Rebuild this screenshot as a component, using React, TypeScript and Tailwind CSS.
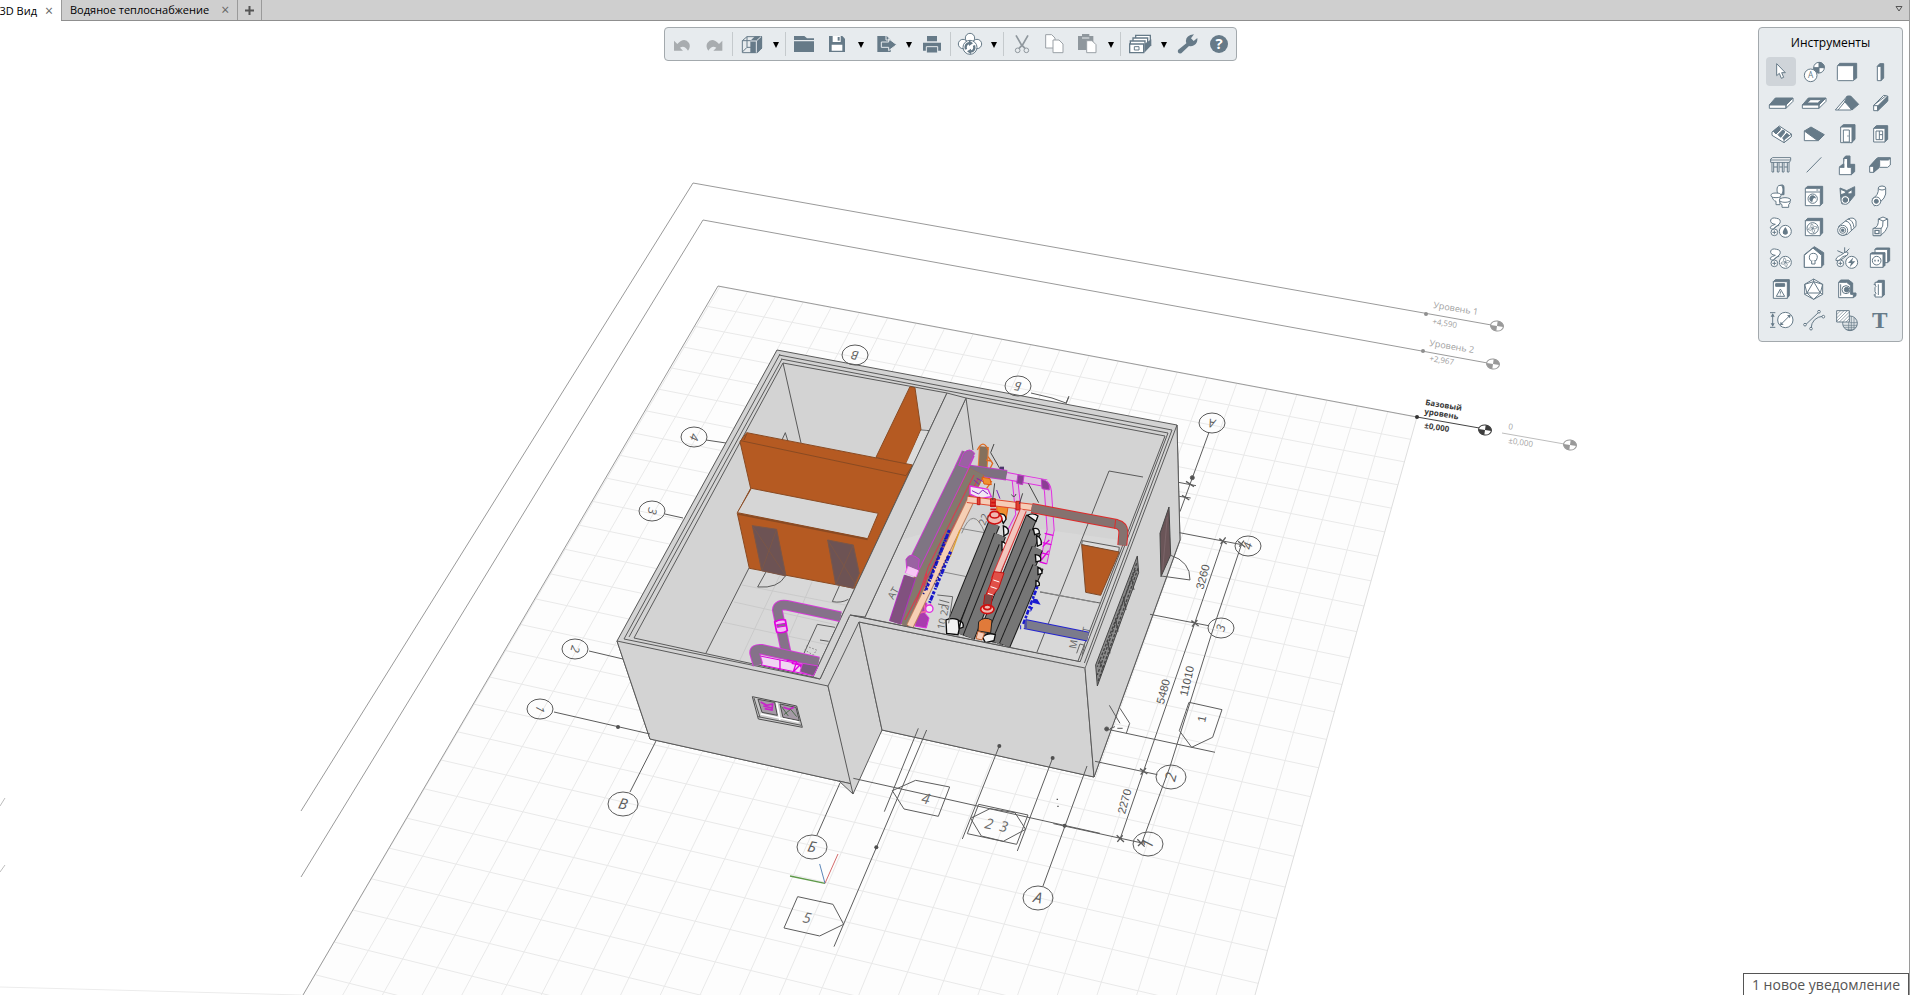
import React, { useState } from 'react';

const DARK = '#667a88';

interface Item {
  label: string;
  art: React.ReactNode;
}

interface ToolbarItem extends Item {
  menu?: boolean;
  off?: boolean;
  endGroup?: boolean;
}

const fan = (cx: number, cy: number, r: number) => (
  <>
    <circle cx={cx} cy={cy} r={r} />
    <path
      fill="none"
      strokeWidth="2"
      d={`M${cx} ${cy}q-10 -4 -4 -13q8 0 4 13q4 -10 13 -4q0 8 -13 4q10 4 4 13q-8 0 -4 -13q-4 10 -13 4q0 -8 13 -4`}
    />
  </>
);

const hose = (
  <>
    <path d="M10 42Q2 36 14 31L22 28Q6 26 8 15Q12 6 26 10Q40 12 36 24Q28 34 16 42Z" />
    <path fill="none" d="M16 42Q24 32 34 30" />
    <circle cx="19" cy="52" r="10" />
    <path d="M19 46v12M13 52h12" />
  </>
);

const toolbarItems: ToolbarItem[] = [
  {
    label: 'Отменить',
    off: true,
    art: <path fill="#a8acaf" stroke="none" d="M15 26V56H42L33 47Q46 38 57 56Q66 44 60 33Q46 14 25 36Z" />,
  },
  {
    label: 'Повторить',
    off: true,
    endGroup: true,
    art: <path fill="#a8acaf" stroke="none" d="M64 26V56H37L46 47Q33 38 22 56Q13 44 19 33Q33 14 54 36Z" />,
  },
  {
    label: 'Вид',
    menu: true,
    endGroup: true,
    art: (
      <>
        <path d="M10 26L24 14H68V48L54 62H10Z" fill="none" />
        <path d="M10 26H38M24 14V46L10 60M24 46H40" fill="none" />
        <path fill={DARK} stroke="none" d="M34 26L48 13H69V49L55 63H34Z" />
        <path fill="none" stroke="#e7ebee" d="M34 27H52V62M52 27L66 14" />
      </>
    ),
  },
  {
    label: 'Открыть',
    art: <path fill={DARK} stroke="none" d="M9 12H40L48 19H69V24H9ZM9 28H69V60H9Z" />,
  },
  {
    label: 'Сохранить',
    menu: true,
    art: (
      <>
        <path fill={DARK} stroke="none" d="M15 12H55L63 20V60H15Z" />
        <path stroke="none" d="M26 12H50V30H26ZM23 38H55V56H23Z" />
        <path fill={DARK} stroke="none" d="M41 15h6v11h-6z" />
      </>
    ),
  },
  {
    label: 'Экспорт',
    menu: true,
    art: (
      <>
        <path fill={DARK} stroke="none" d="M16 12H44L56 24V60H16Z" />
        <path stroke="#e7ebee" d="M28 30H50V20L74 38L50 56V46H28Z" fill={DARK} />
        <path fill="none" stroke="#e7ebee" d="M42 12V24H54" />
      </>
    ),
  },
  {
    label: 'Печать',
    endGroup: true,
    art: (
      <>
        <path fill={DARK} stroke="none" d="M24 12H54V28H24ZM12 32H66V56H12Z" />
        <path fill={DARK} stroke="#e7ebee" d="M22 44H56V63H22Z" />
      </>
    ),
  },
  {
    label: 'Обмен',
    menu: true,
    endGroup: true,
    art: (
      <>
        <circle cx="39" cy="18" r="14" />
        <circle cx="18" cy="36" r="14" />
        <circle cx="60" cy="36" r="14" />
        <circle cx="39" cy="46" r="21" />
        <path fill="none" strokeWidth="7" d="M27 52Q22 36 38 33M51 40Q56 56 40 59" />
        <path fill={DARK} d="M36 25L48 34L36 42ZM42 50L30 58L42 67Z" stroke="none" />
      </>
    ),
  },
  {
    label: 'Вырезать',
    off: true,
    art: (
      <g fill="none" stroke="#8f979d">
        <circle cx="26" cy="55" r="7" />
        <circle cx="52" cy="55" r="7" />
        <path strokeWidth="5" d="M21 10L37 38L48 49M57 10L41 38L30 49" />
      </g>
    ),
  },
  {
    label: 'Копировать',
    off: true,
    art: (
      <g stroke="#9ba1a6">
        <path d="M14 8H32L42 18V48H14Z" />
        <path d="M36 24H54L66 36V62H36Z" />
      </g>
    ),
  },
  {
    label: 'Вставить',
    off: true,
    menu: true,
    endGroup: true,
    art: (
      <>
        <path fill="#8f979d" stroke="none" d="M12 12H24V6H46V12H58V54H12Z" />
        <path stroke="#e7ebee" fill="none" d="M24 18H46" />
        <path stroke="#9ba1a6" d="M38 26H54L66 38V62H38Z" />
      </>
    ),
  },
  {
    label: 'Библиотека',
    menu: true,
    art: (
      <>
        <path d="M26 22V10H70V34" strokeWidth="4" />
        <path d="M18 30V18H62V36" strokeWidth="4" />
        <path d="M10 36V27H54V36" strokeWidth="4" />
        <path fill={DARK} d="M52 36L73 22V40L52 62Z" stroke="none" />
        <path strokeWidth="4" d="M8 36H50V62H8Z" />
        <path d="M22 44H36V54H22Z" />
      </>
    ),
  },
  {
    label: 'Настройки',
    art: (
      <path
        fill={DARK}
        stroke="none"
        d="M12 54L37 34Q32 16 49 9L60 7L51 19L59 27L70 18Q72 34 60 40Q52 44 45 42L22 64Q9 66 12 54Z"
      />
    ),
  },
  {
    label: 'Справка',
    art: (
      <>
        <circle cx="39" cy="36" r="27" fill={DARK} stroke="none" />
        <text x="39" y="52" textAnchor="middle" stroke="none" fontSize="45" fontWeight="700">
          ?
        </text>
      </>
    ),
  },
];

const tools: Item[] = [
  { label: 'Выбор', art: <path d="M26 11V47L34 40L40 55L47 52L41 38H52Z" /> },
  {
    label: 'Уровень и ось',
    art: (
      <>
        <circle cx="54" cy="23" r="16" />
        <path fill={DARK} d="M54 23V7A16 16 0 0 1 70 23ZM54 23V39A16 16 0 0 1 38 23Z" />
        <circle cx="29" cy="46" r="19" />
        <text x="29" y="55" textAnchor="middle" fontSize="25" fill={DARK} stroke="none">
          A
        </text>
      </>
    ),
  },
  {
    label: 'Стена',
    art: (
      <>
        <path fill={DARK} d="M11 17L17 10H68V54L57 62Z" />
        <rect x="10" y="17" width="49" height="45" rx="3" />
      </>
    ),
  },
  {
    label: 'Колонна',
    art: (
      <>
        <path fill={DARK} d="M31 19L38 11H50V54L42 62Z" />
        <path d="M31 19H42V62H31Z" />
      </>
    ),
  },
  {
    label: 'Перекрытие',
    art: (
      <>
        <path fill={DARK} d="M22 21H75L54 42H4Z" />
        <path d="M4 42H54V52H4ZM54 42L75 21V31L54 52Z" />
      </>
    ),
  },
  {
    label: 'Проём',
    art: (
      <>
        <path fill={DARK} d="M22 21H75L54 42H4Z" />
        <path d="M29 26H62L50 36H18Z" />
        <path d="M4 42H54V52H4ZM54 42L75 21V31L54 52Z" />
      </>
    ),
  },
  {
    label: 'Крыша',
    art: (
      <>
        <path d="M4 57L40 15L52 57Z" />
        <path fill="none" d="M12 57L38 26" />
        <path fill={DARK} d="M40 15H50L74 40L54 57L32 32Z" />
      </>
    ),
  },
  {
    label: 'Балка',
    art: (
      <>
        <path d="M20 43L50 13L62 15V30L32 59H20Z" />
        <path fill={DARK} d="M32 45L62 15V30L32 59Z" />
        <path fill="none" d="M20 44H32V58M20 43L26 38L56 15" />
      </>
    ),
  },
  {
    label: 'Лестница',
    art: (
      <>
        <path d="M12 30L34 12L70 36V44L48 62L12 40Z" />
        <path fill={DARK} d="M16 28L32 14Q40 16 36 24L24 36ZM30 38L44 24Q54 26 48 34L38 46ZM44 48L56 34Q66 38 60 44L50 56Z" />
        <path d="M48 54L70 36V44L48 62Z" />
      </>
    ),
  },
  {
    label: 'Пандус',
    art: (
      <>
        <path fill={DARK} d="M10 27L30 15L70 38L52 56Z" />
        <path d="M10 27L50 56H10Z" />
      </>
    ),
  },
  {
    label: 'Дверь',
    art: (
      <>
        <path fill={DARK} d="M20 15L28 8H63V52L53 62Z" />
        <path d="M20 15H54V62H20ZM28 24H46V60H28Z" />
        <path d="M40 42h4" />
      </>
    ),
  },
  {
    label: 'Окно',
    art: (
      <>
        <path fill={DARK} d="M20 19L28 11H62V52L53 60Z" />
        <path d="M20 19H54V60H20ZM27 27H47V53H27ZM37 27V53M37 38H47" />
      </>
    ),
  },
  {
    label: 'Ограждение',
    art: (
      <>
        <path d="M12 26H17V57H12ZM28 26H33V57H28ZM43 26H48V57H43ZM58 26H63V57H58Z" />
        <path d="M8 18L14 14H68V22L64 28H8Z" />
        <path d="M8 21H66M18 42H28M34 42H43M49 42H58" />
      </>
    ),
  },
  { label: 'Линия', art: <path d="M17 58L61 13" /> },
  {
    label: 'Фундамент',
    art: (
      <>
        <path fill={DARK} d="M16 42L26 34H62V56L52 65Z" />
        <path d="M16 43H52V65H16Z" />
        <path fill={DARK} d="M29 16L35 9H48V36L41 42Z" />
        <path stroke="none" d="M31 18H40V46H31Z" />
        <path fill="none" d="M29 43V16H41V42" />
      </>
    ),
  },
  {
    label: 'Профиль',
    art: (
      <>
        <path d="M8 40L32 14H70V36L62 43H38L20 58H8Z" />
        <path fill={DARK} d="M30 16H70L64 21H40L20 40H8ZM20 40L38 24V40L20 58Z" />
      </>
    ),
  },
  {
    label: 'Сантехника',
    art: (
      <>
        <path fill={DARK} d="M32 6Q48 -2 48 10V32H32Z" />
        <ellipse cx="36" cy="18" rx="9" ry="14" />
        <path d="M12 36Q14 50 24 52V62H36V36Z" />
        <ellipse cx="24" cy="34" rx="15" ry="7" />
        <path d="M34 50Q36 60 42 62V70H62V62Q68 58 66 48Z" />
        <ellipse cx="51" cy="48" rx="17" ry="7" />
      </>
    ),
  },
  {
    label: 'Оборудование',
    art: (
      <>
        <path fill={DARK} d="M13 13L20 7H65V58L56 66Z" />
        <path d="M13 13H58V65H13ZM13 24H58" />
        <circle cx="35" cy="44" r="14" />
        <path fill={DARK} stroke="none" d="M27 38A10 10 0 0 1 45 44Q36 38 34 54A10 10 0 0 1 27 38Z" />
        <path d="M46 18h6" />
      </>
    ),
  },
  {
    label: 'Арматура',
    art: (
      <>
        <path fill={DARK} d="M18 12L38 20L62 8V34L44 56L24 60L20 40Z" />
        <path d="M20 16L34 22V28L20 32ZM42 24L54 17V29L42 30Z" />
        <circle cx="34" cy="48" r="13" />
        <circle cx="34" cy="48" r="7" fill={DARK} />
      </>
    ),
  },
  {
    label: 'Труба',
    art: (
      <>
        <path d="M34 12Q46 2 56 12V30Q54 42 40 54L22 66L16 44Q36 34 34 12Z" />
        <ellipse cx="45" cy="12" rx="11" ry="6" />
        <circle cx="28" cy="52" r="13" />
        <circle cx="28" cy="52" r="6" fill={DARK} />
      </>
    ),
  },
  {
    label: 'Система водоснабжения',
    art: (
      <>
        {hose}
        <circle cx="52" cy="49" r="18" />
        <path fill={DARK} stroke="none" d="M52 36Q62 50 59 55Q52 64 45 55Q42 50 52 36Z" />
      </>
    ),
  },
  {
    label: 'Вентиляционное оборудование',
    art: (
      <>
        <path fill={DARK} d="M13 17L20 10H65V54L56 62Z" />
        <path d="M13 17H58V62H13Z" />
        {fan(35, 40, 17)}
      </>
    ),
  },
  {
    label: 'Деталь воздуховода',
    art: (
      <>
        <path d="M14 34L42 12Q60 4 66 18V34L40 58Q26 66 14 56Z" />
        <path fill="none" d="M34 18Q52 20 52 46M42 12Q58 16 60 38" />
        <circle cx="26" cy="46" r="15" />
        <circle cx="26" cy="46" r="9" />
        <circle cx="26" cy="46" r="4" fill={DARK} />
      </>
    ),
  },
  {
    label: 'Воздуховод',
    art: (
      <>
        <path d="M20 40Q36 36 34 12L48 6L62 12V34Q58 50 40 62H20Z" />
        <path fill="none" d="M34 12L48 18L62 12M48 18Q50 36 40 44" />
        <path d="M18 40H42V62H18Z" />
        <path strokeWidth="4" d="M24 46H36V56H24Z" />
      </>
    ),
  },
  {
    label: 'Система вентиляции',
    art: (
      <>
        {hose}
        {fan(52, 49, 18)}
      </>
    ),
  },
  {
    label: 'Осветительный прибор',
    art: (
      <>
        <path fill={DARK} d="M10 26L40 2L68 20V56L60 64H10Z" />
        <path d="M10 28L36 6L62 28V64H10Z" />
        <circle cx="37" cy="34" r="12" />
        <path d="M32 45V54H42V45" />
      </>
    ),
  },
  {
    label: 'Электрическая система',
    art: (
      <>
        <path d="M6 44Q4 34 20 28L34 18Q44 16 42 24Q34 34 20 42Z" />
        <path fill="none" d="M16 42Q26 28 40 28M10 14L28 22M32 4V20M46 8L34 20" />
        <circle cx="19" cy="52" r="10" />
        <path d="M19 46v12M13 52h12" />
        <circle cx="53" cy="49" r="18" />
        <path fill={DARK} stroke="none" d="M58 34L42 51H51L47 64L64 46H54Z" />
      </>
    ),
  },
  {
    label: 'Розетка',
    art: (
      <>
        <path fill={DARK} d="M24 10L28 6H68V44L62 50Z" />
        <path d="M24 10H62V50H24Z" />
        <path fill={DARK} d="M10 24L14 20H54V58L48 64Z" />
        <path d="M10 24H48V64H10Z" />
        <circle cx="29" cy="44" r="13" />
        <path strokeWidth="5" d="M22 44h4M32 44h4" />
      </>
    ),
  },
  {
    label: 'Распределительный щит',
    art: (
      <>
        <path fill={DARK} d="M16 14L22 8H64V56L57 64Z" />
        <path d="M16 14H58V64H16Z" />
        <path fill={DARK} d="M23 20H50V28H23Z" />
        <path d="M37 36L50 58H25Z" />
        <path d="M37 43V50M37 53V55" />
      </>
    ),
  },
  {
    label: 'Элемент',
    art: (
      <>
        <path d="M38 6L65 22V52L38 67L11 52V22Z" />
        <path fill="none" d="M38 14L58 48H18ZM38 6V14M11 22L38 14L65 22M58 48L65 52M18 48L11 52M11 22L18 48L38 67L58 48L65 22" />
      </>
    ),
  },
  {
    label: 'Датчик',
    art: (
      <>
        <path fill={DARK} d="M14 16L20 9H44L56 18V48H66V56L58 62Z" />
        <path d="M14 16H38L50 26V52H58V62H14ZM20 22V56" />
        <circle cx="36" cy="38" r="12" />
        <circle cx="38" cy="38" r="7" fill={DARK} />
      </>
    ),
  },
  {
    label: 'Сборка',
    art: (
      <>
        <path fill={DARK} d="M28 16L34 10H52V54L44 60Z" />
        <path d="M24 16H46V60H24V52Q30 50 24 44V32Q30 28 24 24Z" />
        <path d="M20 22h6M20 54h6M34 22v32" />
      </>
    ),
  },
  {
    label: 'Размер',
    art: (
      <>
        <path d="M6 14H22M6 58H22M14 18V54" fill="none" />
        <path fill={DARK} stroke="none" d="M14 16L20 26H8ZM14 56L20 46H8Z" />
        <circle cx="52" cy="36" r="23" />
        <path d="M38 50L66 22" />
        <path fill={DARK} stroke="none" d="M68 20L66 31L57 22ZM36 52L38 41L47 50Z" />
      </>
    ),
  },
  {
    label: 'Сплайн',
    art: (
      <>
        <path fill="none" d="M14 50L54 12M30 62Q32 28 68 24" />
        <circle cx="12" cy="50" r="4" />
        <circle cx="54" cy="11" r="4" />
        <circle cx="30" cy="62" r="4" />
        <circle cx="67" cy="26" r="4" />
      </>
    ),
  },
  {
    label: 'Штриховка',
    art: (
      <>
        <circle cx="48" cy="46" r="22" fill="#dfe4e7" />
        <path fill="none" strokeWidth="2" d="M28 52h41M30 58h36M36 64h24M44 36v32M52 26v42M60 30v34M46 44h24" />
        <path d="M8 8H46V42H8Z" />
        <path fill="none" strokeWidth="2" d="M8 20L20 8M8 30L30 8M8 40L40 8M16 42L46 12M26 42L46 22M36 42L46 32" />
      </>
    ),
  },
  {
    label: 'Текст',
    art: (
      <text x="38" y="60" textAnchor="middle" fontSize="70" fontWeight="700" fill={DARK} stroke="none" fontFamily="Liberation Serif, serif">
        T
      </text>
    ),
  },
];

const Icon: React.FC<{ children: React.ReactNode }> = ({ children }) => (
  <svg viewBox="0 0 78 72" className="h-6 w-[26px] shrink-0 overflow-visible fill-white stroke-[#667a88] stroke-[3px]">
    {children}
  </svg>
);

interface PipeProps {
  d: string;
  w: number;
  edge: string;
  fill: string;
}

const Pipe: React.FC<PipeProps> = ({ d, w, edge, fill }) => (
  <g fill="none" strokeLinejoin="round">
    <path d={d} stroke={edge} strokeWidth={w + 6} />
    <path d={d} stroke={fill} strokeWidth={w} />
  </g>
);

// Vanishing points of the two grid directions
const VA = { x: 2130, y: -2110 };
const VB = { x: -11717, y: -2044 };

const gridA = Array.from({ length: 24 }, (_, i) => 303 + i * 39.7);
const gridB = Array.from({ length: 29 }, (_, i) => (995 - VB.y) / (4500 - i * 152 - VB.x));

interface Bubble {
  x: number;
  y: number;
  t: string;
  rot: number;
  big?: boolean;
}

const bubbles: Bubble[] = [
  { x: 855, y: 355, t: 'В', rot: 190 },
  { x: 1018, y: 386, t: 'Б', rot: 190 },
  { x: 694, y: 437, t: '4', rot: 105 },
  { x: 652, y: 511, t: '3', rot: 100 },
  { x: 575, y: 649, t: '2', rot: 105 },
  { x: 540, y: 709, t: '1', rot: 105 },
  { x: 623, y: 804, t: 'В', rot: 12, big: true },
  { x: 812, y: 847, t: 'Б', rot: 12, big: true },
  { x: 1038, y: 898, t: 'А', rot: 12, big: true },
  { x: 1212, y: 423, t: 'А', rot: 190 },
  { x: 1248, y: 546, t: '4', rot: -75 },
  { x: 1221, y: 628, t: '3', rot: -75 },
  { x: 1171, y: 777, t: '2', rot: -75, big: true },
  { x: 1148, y: 844, t: '1', rot: -75, big: true },
];

const LevelMark: React.FC<{ x: number; y: number; color: string }> = ({ x, y, color }) => (
  <g transform={`translate(${x} ${y}) rotate(8)`} stroke={color}>
    <ellipse rx="6.5" ry="5" fill="#fff" />
    <path fill={color} stroke="none" d="M0 0V-5A6.5 5 0 0 1 6.5 0ZM0 0V5A6.5 5 0 0 1 -6.5 0Z" />
  </g>
);

const Levels: React.FC = () => (
  <g fill="none" stroke="#9a9a9a">
    <path d="M301 811L693 183L1497 326M301 877L703 220L1493 364M303 995L718 286L1417 417" />
    <path stroke="#dedede" d="M1417 417L1255 995" />
    <path stroke="#ececec" d="M0 987L301 995" />
    <path stroke="#bdbdbd" d="M1502 433L1570 445M0 806L5 798M0 872L5 865" />
    <path stroke="#444" d="M1417 417L1485 429" />
    <g fill="#8f8f8f" stroke="none">
      <circle cx="1426" cy="314" r="2" />
      <circle cx="1423" cy="351" r="2" />
      <circle cx="1417" cy="417" r="2" fill="#333" />
    </g>
    <LevelMark x={1497} y={326} color="#999" />
    <LevelMark x={1493} y={364} color="#999" />
    <LevelMark x={1485} y={430} color="#3c3c3c" />
    <LevelMark x={1570} y={445} color="#999" />
    <g stroke="none" fill="#a2a2a2" fontSize="9">
      <text transform="translate(1433 308) rotate(9)">Уровень 1</text>
      <text transform="translate(1432 324) rotate(9)" fontSize="8">+4,590</text>
      <text transform="translate(1429 346) rotate(9)">Уровень 2</text>
      <text transform="translate(1429 361) rotate(9)" fontSize="8">+2,967</text>
      <text transform="translate(1508 429) rotate(9)" fontSize="8">0</text>
      <text transform="translate(1508 443) rotate(9)" fontSize="8">±0,000</text>
      <g fill="#3a3a3a" fontWeight="700" fontSize="8">
        <text transform="translate(1425 405) rotate(9)">Базовый</text>
        <text transform="translate(1424 414) rotate(9)">уровень</text>
        <text transform="translate(1424 428) rotate(9)">±0,000</text>
      </g>
    </g>
  </g>
);

const Axes: React.FC = () => (
  <g fill="none" stroke="#5c5c5c">
    {/* left side */}
    <path d="M706 440L726 443M665 514L683 518M589 651L623 659M554 712L650 734M630 792L656 741M817 835L840 783M1043 886L1087 766" />
    <path d="M1031 393L1052 398L1066 403M1066 403L1069 396" />
    {/* cuts and markers at the front */}
    <g transform="translate(760 700) scale(.3333)" strokeWidth="3">
      <path d="M280 235L1020 400M475 85L373 335M500 90L222 740M718 138L607 417M878 174L772 453" />
      <path d="M397 272L467 241L569 261L535 349L432 327ZM113 590L219 613L251 673L179 708L72 684Z" />
      <path d="M656 313L804 345L770 433L622 401ZM632 355L690 326L765 338L797 388L730 424L664 408Z" />
      <g fill="#505050" stroke="none">
        <circle cx="349" cy="442" r="6" />
        <circle cx="718" cy="138" r="6" />
        <circle cx="878" cy="174" r="6" />
        <circle cx="914" cy="377" r="6" />
        <path d="M890 296h4v4h-4zM892 317h4v4h-4z" />
      </g>
      <path stroke="#5f9a4a" strokeWidth="4" d="M90 528L195 550" />
      <path stroke="#d46a6a" d="M195 550L234 462" />
      <path stroke="#5b86b8" d="M195 550L179 492" />
      <g fill="#6c6c6c" stroke="none" fontSize="44" fontStyle="italic">
        <text transform="translate(482 308) rotate(12)">4</text>
        <text transform="translate(126 666) rotate(12)">5</text>
        <text transform="translate(672 384) rotate(12)">2</text>
        <text transform="translate(716 392) rotate(12)">3</text>
      </g>
    </g>
    {/* dimensions on the right */}
    <g transform="translate(1060 380) scale(.3333)" strokeWidth="3">
      <path d="M447 157L360 395M355 307L408 317M357 349L392 354M358 458L540 493M270 703L445 737M105 1144L292 1184M-20 1331L250 1390" />
      <path d="M489 482L404 730L250 1175L180 1378M545 492L460 745L330 1160L245 1390" />
      <path d="M138 1047L465 1117M387 967L486 989L458 1072L395 1102L358 1052ZM148 976L180 1030M180 985L209 1030L199 1060M165 1040L150 1046M172 1045h16" />
      <path strokeWidth="4" d="M478 476L500 492M482 492L497 472M534 484L556 502M538 500L552 482M394 722L416 738M396 740L412 720M240 1166L262 1182M242 1184L258 1164M170 1366L192 1386M172 1386L188 1366M232 1378L254 1400M234 1398L252 1380M378 304L402 320M366 346L388 360" />
      <path d="M330 525Q392 545 390 600L303 588" />
      <path d="M18 72L26 52" />
      <circle cx="397" cy="293" r="6" fill="#505050" />
      <circle cx="140" cy="1047" r="6" fill="#505050" />
      <g fill="#555" stroke="none" fontSize="34" className="font-['Liberation_Sans',sans-serif]">
        <text transform="translate(430 630) rotate(-75)">3260</text>
        <text transform="translate(311 974) rotate(-75)">5480</text>
        <text transform="translate(382 950) rotate(-77)">11010</text>
        <text transform="translate(195 1304) rotate(-75)">2270</text>
        <text transform="translate(435 1028) rotate(-78)">1</text>
      </g>
    </g>
    <circle cx="618" cy="727" r="2" fill="#505050" stroke="none" />
    {bubbles.map((b, i) => (
      <g key={i} transform={`translate(${b.x} ${b.y})`}>
        <ellipse rx={b.big ? 15 : 13} ry={b.big ? 12 : 10} />
        <text transform={`rotate(${b.rot})`} y={b.big ? 5 : 4} textAnchor="middle" fontSize={b.big ? 15 : 12} fill="#5c5c5c" stroke="none" fontStyle="italic">
          {b.t}
        </text>
      </g>
    ))}
  </g>
);

const Shell: React.FC = () => (
  <g stroke="#5a5a5a" fill="#d3d3d3" strokeLinejoin="round">
    <path d="M777 350L1177 425L1180 540L1094 777L882 730L852 784L650 739L617 641Z" />
    {/* floors */}
    <path fill="#d8d8d8" stroke="none" d="M749 568L855 588L813 677L706 653ZM973 520L1120 540L1098 606L1078 661L866 617L900 540Z" />
    <path stroke="#cacaca" fill="none" d="M742 585L850 606M734 602L842 626M722 622L834 646M780 575L740 660M812 582L775 668" />
    {/* wall tops */}
    <path fill="none" d="M780 354L624 639M782 359L629 637M783 363L634 638M779 355L1172 430M781 359L1168 433M783 363L947 393M966 398L1165 436L1078 661" />
    <path fill="none" d="M1172 430L1084 664M1168 433L1080 662M634 638L813 677M624 639L820 679M947 393L813 677M966 398L865 617" />
    <path fill="none" d="M850 615L1080 662M850 615L820 679M783 363L801 443M966 398L973 450M749 568L706 653" />
    <path fill="none" d="M1143 477L1109 471L1037 652M1040 592L1100 603" />
    {/* outside faces */}
    <path d="M617 641L828 686L852 784L650 739Z" />
    <path d="M839 781L852 784L853 794Z" />
    <path d="M828 686L859 622L882 730L853 794Z" />
    <path d="M859 622L1085 668L1094 777L882 730Z" />
    <path d="M1085 668L1177 425L1180 540L1094 777Z" />
  </g>
);

const LeftRooms: React.FC = () => (
  <g transform="translate(600 320) scale(.3333)" strokeWidth="3" stroke="#8a4a22" fill="#b55a22">
    <path fill="none" stroke="#5a5a5a" d="M545 362L556 338L564 364M963 330L988 332" />
    <path d="M930 200L945 203L963 328L918 434L828 412Z" />
    <path fill="#dcdcdc" stroke="none" d="M963 332L982 332L940 435L918 432Z" />
    <path d="M440 338L938 435L765 805L448 745L412 580L452 505L420 365Z" />
    <path fill="none" d="M422 362L918 467L938 435M440 342L432 360" />
    <path fill="#d6d6d6" d="M454 505L835 580L803 656L412 578Z" />
    <path fill="none" strokeWidth="5" d="M414 582L803 658" />
    <g fill="#6d5354" stroke="#7a5648">
      <path d="M457 617L530 628L558 768L485 752Z" />
      <path d="M683 660L760 675L778 760L760 805L707 793Z" />
      <path fill="none" d="M457 617L558 768M530 628L485 752M683 660L765 790M760 675L707 793" />
    </g>
    <path fill="none" stroke="#5a5a5a" d="M498 756L473 801Q535 806 556 768M718 798L697 845Q725 850 745 838" />
  </g>
);

const LeftPipes: React.FC = () => (
  <g transform="translate(600 600) scale(.3333)" strokeWidth="3">
    <path fill="none" stroke="#5a5a5a" d="M705 82L652 73L612 160M660 120L686 124" />
    <path fill="none" stroke="#8a8a8a" strokeDasharray="5 5" d="M618 138L650 150L640 165L614 150" />
    <Pipe d="M560 165L532 30Q534 12 560 16L722 50" w={26} edge="#d53bd8" fill="#857289" />
    <path fill="#f3b8f5" stroke="#e000e0" strokeWidth="5" d="M524 66Q540 56 556 60L562 92Q546 102 530 96Z" />
    <path fill="#857289" stroke="#e000e0" d="M530 74l26-4 2 8-26 4Z" />
    <path fill="#f0d5f2" stroke="#e000e0" d="M480 168L640 200L630 225L485 195Z" />
    <Pipe d="M474 195L464 160Q462 146 484 148L656 186" w={26} edge="#d53bd8" fill="#857289" />
    <path fill="none" stroke="#e000e0" strokeWidth="4" d="M560 180l30 5-10 30 20-20 12 24M575 190l50 10M540 180v30" />
    <path fill="#7a5a80" stroke="#d53bd8" d="M608 190L655 198L640 228L600 215Z" />
    {/* window */}
    <path fill="#c9c9c9" stroke="#4c4c4c" d="M457 290L590 318L607 382L475 357Z" />
    <path fill="#a59aa6" stroke="#4c4c4c" d="M474 298L524 307L532 346L486 337ZM540 312L588 322L598 362L549 352Z" />
    <path fill="none" stroke="#c724c9" strokeWidth="5" d="M482 306l18 10 18-4-2 18-22-4M550 322l18 6 14-6M490 318l26 6" />
    <path fill="none" stroke="#4c6a4c" d="M552 344l20-16 18 22M545 320l20 28" />
    <path fill="none" stroke="#fff" strokeWidth="5" d="M530 308L540 360M482 342L596 366" />
    <path fill="none" stroke="#555" d="M474 350L604 376M462 294L480 352" />
  </g>
);

const tubesLeft = ['M432 372L310 670', 'M450 405L336 705', 'M464 440L356 712'];
const tubesRight = ['M545 350L398 716', 'M556 395L420 724', 'M562 445L441 730', 'M564 500L464 736'];

const BoilerRoom: React.FC = () => (
  <g transform="translate(850 400) scale(.3333)" strokeWidth="3" fill="none">
    <g stroke="#8a8a8a">
      <path d="M330 385L415 400M335 400Q370 310 405 400M275 515L350 530M570 575L740 608" />
    </g>
    {/* cabinet */}
    <path fill="#dcdcdc" stroke="#5a5a5a" d="M697 422L808 442L806 458L695 434Z" />
    <path fill="#b55a22" stroke="#7d4a2a" d="M695 434L808 456L752 586L707 577Z" />
    {/* back wall fittings */}
    <Pipe d="M398 205L402 140" w={24} edge="#e8803a" fill="#85705c" />
    <path stroke="#e06a20" strokeWidth="4" d="M382 150Q400 115 414 150M414 170l14 20-10 20M400 235l24 10-14 20M408 180l18 4" />
    <path stroke="#444" d="M432 132L422 158L452 210" />
    <path fill="#4a3a6a" stroke="none" d="M450 200h12v22h-12z" />
    <Pipe d="M495 240L506 345L478 400" w={14} edge="#e030e0" fill="#dcc4dc" />
    <Pipe d="M580 250Q592 255 594 275L602 390L580 490" w={18} edge="#e030e0" fill="#d8c6d8" />
    <path stroke="#e000e0" strokeWidth="4" d="M584 400l26 6M578 428l26 6M572 458l24 6M570 486l20 6M578 440l20-20M574 480l22-28" />
    <Pipe d="M322 205L470 226" w={26} edge="#c040c8" fill="#7d7080" />
    <Pipe d="M470 228L590 250" w={18} edge="#e030e0" fill="#dcc4de" />
    <path fill="#8a3f93" stroke="#c040c8" d="M504 224l18 4-4 26-18-4ZM574 238q28 4 24 32l-22-4Z" />
    {/* long mains on the left */}
    <Pipe d="M380 215L150 670" w={46} edge="#c4652f" fill="#83796d" />
    <Pipe d="M355 160L332 210L190 500" w={36} edge="#c83ccf" fill="#7f7583" />
    <path fill="#9a62a2" stroke="#c83ccf" d="M340 160q20-20 34 0l-20 44-28-8ZM168 478q12-24 40 0l-4 34-34-6Z" />
    <Pipe d="M190 505L182 525" w={32} edge="#f060f0" fill="#f6c8f4" />
    <Pipe d="M180 530L135 668" w={32} edge="#b030c0" fill="#81517f" />
    <path stroke="#e8304a" d="M385 235L165 660M372 225L235 500L178 670M230 520L205 665" />
    <path fill="#a83cae" stroke="#e030e0" d="M205 600l26 10-6 30 12 14-8 30-34-6Z" />
    <path stroke="#f06aa0" strokeWidth="5" d="M205 605q20 0 20 20t18-14M200 640l30-6" />
    <Pipe d="M360 305L180 678" w={18} edge="#b98060" fill="#f6cfb4" />
    <path stroke="#e0a030" strokeWidth="4" d="M330 390L300 470" />
    <path stroke="#1818c8" strokeWidth="9" strokeDasharray="9 4 16 3 5 6" d="M298 390L228 570M302 455L238 610" />
    <path stroke="#10108c" strokeWidth="5" strokeDasharray="4 7" d="M286 415L218 588M292 470L252 560" />
    <g fill="#f2e6f4" stroke="#e030e0" strokeWidth="4">
      <path d="M360 258l54 10 10 22-34 6-30-14Z" />
      <circle cx="238" cy="626" r="11" />
    </g>
    <path stroke="#8020c0" strokeWidth="3" d="M380 235l40 20M366 272l20 10 12-12 16 12M440 270l10 26M372 240l16 14" />
    <path fill="#f09030" stroke="#e05a10" d="M396 232l24 4 4 18-22-2ZM440 316l34 6-6 36-26-6Z" />
    <Pipe d="M352 298L545 322" w={16} edge="#e04a30" fill="#f6cdb8" />
    <path fill="#e04030" stroke="#c01818" d="M498 304h12v26h-12ZM422 296h14v24h-14ZM382 292h8v22h-8z" />
    <path stroke="#444" d="M535 250L566 308M434 250L428 300M518 280L508 312M484 284q10 12 14-2" />

    {/* tube bundles */}
    {tubesLeft.map((d) => (
      <Pipe key={d} d={d} w={32} edge="#1a1a1a" fill="#767676" />
    ))}
    {tubesRight.map((d) => (
      <Pipe key={d} d={d} w={30} edge="#1a1a1a" fill="#767676" />
    ))}
    <g fill="#f2f2f2" stroke="#0c0c0c" strokeWidth="4">
      <path d="M448 342q20-2 20 16l-8 12ZM460 378q20 6 14 22l-12 8ZM456 425q16 4 12 20l-12 6Z" />
      <path d="M532 346q18-10 32 2l-6 16ZM550 386q20-4 18 14l-14 4ZM560 407q16 6 14 26l-12 6ZM556 464q20 2 16 18l-14 4ZM564 502q14 6 12 18l-12 4ZM558 542q12 2 10 14l-10 4Z" />
      <path d="M288 660q28-10 44 6l-8 38-34-4ZM325 662q18 2 14 20l-12 4Z" />
      <path d="M398 712q14-16 38-8l-4 18-26 6Z" />
    </g>
    <path fill="#e07a3a" stroke="#222" d="M386 665q18-18 40-4l-4 38-38-6Z" />
    <path fill="#f6cdb8" stroke="#c06030" d="M384 694l20 6-8 20-18-4Z" />
    {/* red riser */}
    <Pipe d="M520 330L432 540" w={16} edge="#d83a3a" fill="#f2c6be" />
    <path fill="#e05048" stroke="#c01010" d="M432 515l30 4-16 46-26 32-14-8 14-34Z" />
    <path stroke="#fff" d="M430 540l18 6M422 560l18 6M414 580l16 6" />
    <Pipe d="M416 585L412 615" w={20} edge="#c01010" fill="#7c4a48" />
    <g fill="#f0b8b0" stroke="#d01010" strokeWidth="5">
      <ellipse cx="412" cy="628" rx="20" ry="13" />
      <ellipse cx="412" cy="622" rx="11" ry="7" />
      <ellipse cx="434" cy="356" rx="22" ry="16" />
      <ellipse cx="434" cy="344" rx="14" ry="10" />
      <path d="M420 318h18M421 328h18M424 308h12" />
    </g>
    {/* red outlet on the right */}
    <Pipe d="M545 324L800 372Q822 378 820 400L817 436" w={24} edge="#e02a2a" fill="#85726f" />
    <path stroke="#e02a2a" d="M797 358L794 386" />
    {/* blue return line */}
    <path stroke="#1a1ad0" strokeWidth="8" strokeDasharray="8 5 14 4" d="M562 560L520 672" />
    <path fill="#1a1ad0" stroke="none" d="M550 596l12 2 10 16-24-6ZM540 620l10 2-8 14Z" />
    <Pipe d="M524 672L714 710" w={24} edge="#2424d0" fill="#7b7b8c" />
    <path stroke="#2424d0" d="M528 660v24M512 676v12" />
    <g fill="#666" stroke="none" fontSize="30">
      <text transform="translate(282 690) rotate(-78)">10 22</text>
      <text transform="translate(130 600) rotate(-60)">AT</text>
      <text transform="translate(405 378) rotate(-70)">22</text>
      <text transform="translate(678 748) rotate(-80)">M</text>
      <text transform="translate(718 700) rotate(-80)">T</text>
    </g>
    <path stroke="#666" d="M262 585L308 590L296 670M268 600l30 8M264 612l30 6M680 760l10-28 14 4-8 30" />
    <path fill="#d3d3d3" stroke="none" d="M-6 646L12 650L708 790L704 806L24 665Z" />
    <path stroke="#5a5a5a" d="M0 645L690 785M27 666L705 804" />
  </g>
);

const RightFace: React.FC = () => (
  <g transform="translate(1060 380) scale(.3333)" strokeWidth="3" stroke="#444">
    <path fill="#6a5558" d="M327 381L332 525L303 590L300 460Z" />
    <path fill="none" stroke="#7a6468" d="M322 410L308 570" />
    <path fill="#8c8c8c" d="M232 528L236 578L112 918L107 855Z" />
    <path fill="none" strokeWidth="4" strokeDasharray="9 5" d="M230 550L112 885M234 565L114 905M226 570L112 860" />
    <path fill="none" d="M214 590l8 40M190 650l8 40M166 715l8 40M142 780l8 40M118 840l12 30" />
  </g>
);

const Scene: React.FC = () => (
  <svg
    viewBox="0 21 1909 974"
    preserveAspectRatio="xMidYMin slice"
    className="absolute inset-0 h-full w-full"
    role="img"
    aria-label="3D Вид"
  >
    <defs>
      <clipPath id="plane">
        <path d="M718 286L1417 417L1255 995H303Z" />
      </clipPath>
    </defs>
    <g clipPath="url(#plane)">
      <path fill="#fdfdfd" d="M718 286L1417 417L1255 995H303Z" />
      <g stroke="#e9e9e9">
        {gridA.map((x) => (
          <line key={x} x1={x} y1={995} x2={x + (VA.x - x) * 0.26} y2={995 + (VA.y - 995) * 0.26} />
        ))}
        {gridB.map((m) => (
          <line key={m} x1={200} y1={VB.y + m * (200 - VB.x)} x2={1500} y2={VB.y + m * (1500 - VB.x)} />
        ))}
      </g>
    </g>
    <Levels />
    <Shell />
    <LeftRooms />
    <path stroke="#5a5a5a" fill="#d3d3d3" d="M947 393L966 398L865 617L850 615L820 679L813 677Z" />
    <BoilerRoom />
    <LeftPipes />
    <RightFace />
    <Axes />
  </svg>
);

const App: React.FC = () => {
  const [active, setActive] = useState('Выбор');

  return (
    <div className="flex min-h-screen flex-col border-r border-[#9a9a9a] bg-white font-['Open_Sans','Noto_Sans',sans-serif] text-black">
      <header className="flex h-[21px] border-b border-[#8f8f8f] bg-[#cfcfcf] text-[11px] leading-4">
        <div className="-mb-px flex w-[61px] items-center justify-end gap-2 bg-white pr-2">
          <button className="whitespace-nowrap">3D Вид</button>
          <button aria-label="Закрыть 3D Вид" className="w-2 text-sm leading-4 text-[#666]">×</button>
        </div>
        <div className="flex items-center gap-3 border-x border-[#9a9a9a] px-2">
          <button className="whitespace-nowrap">Водяное теплоснабжение</button>
          <button aria-label="Закрыть Водяное теплоснабжение" className="w-2 text-sm leading-4 text-[#666]">×</button>
        </div>
        <button aria-label="Новая вкладка" className="flex w-6 items-center justify-center border-r border-[#9a9a9a]">
          <svg viewBox="0 0 9 9" className="h-[9px] w-[9px] stroke-[#555] stroke-2">
            <path d="M4.5 0V9M0 4.5H9" />
          </svg>
        </button>
        <button aria-label="Список вкладок" className="ml-auto flex items-center px-1.5 pb-0.5">
          <svg viewBox="0 0 8 6" className="h-1.5 w-2 fill-none stroke-[#555]">
            <path d="M1 .5H7L4 5Z" />
          </svg>
        </button>
      </header>

      <main className="relative flex flex-1 overflow-hidden">
        <Scene />

        <div className="absolute inset-x-0 top-1.5 flex justify-center pr-2">
          <div role="toolbar" className="flex h-[34px] items-center rounded-sm border border-[#a3a9ad] bg-[#e7ebee] px-px">
            {toolbarItems.map((item) => (
              <React.Fragment key={item.label}>
                <button
                  aria-label={item.label}
                  disabled={item.off}
                  className={item.menu ? 'flex h-8 w-[34px] items-center justify-center' : 'flex h-8 w-8 items-center justify-center'}
                >
                  <Icon>{item.art}</Icon>
                </button>
                {item.menu && (
                  <button aria-label={`${item.label}: меню`} className="flex h-8 w-3.5 items-center justify-center pt-0.5">
                    <svg viewBox="0 0 6 6" className="h-1.5 w-1.5 fill-black">
                      <path d="M0 0H6L3 6Z" />
                    </svg>
                  </button>
                )}
                {item.endGroup && <span className="mx-0.5 h-6 w-px bg-[#c5cacd]" />}
              </React.Fragment>
            ))}
          </div>
        </div>

        <aside className="absolute top-1.5 right-1.5 rounded-sm border border-[#a3a9ad] bg-[#e7ebee] px-[7px] pb-[7px]">
          <h2 className="h-[29px] text-center text-xs leading-[30px]">Инструменты</h2>
          <div className="grid grid-cols-4 gap-x-[3px] gap-y-0.5">
            {tools.map((tool) => (
              <button
                key={tool.label}
                aria-label={tool.label}
                aria-pressed={active === tool.label}
                onClick={() => setActive(tool.label)}
                className={
                  active === tool.label
                    ? 'flex h-[29px] w-[30px] items-center justify-center rounded-sm bg-[#cfd4d9]'
                    : 'flex h-[29px] w-[30px] items-center justify-center rounded-sm'
                }
              >
                <Icon>{tool.art}</Icon>
              </button>
            ))}
          </div>
        </aside>

        <div role="status" className="absolute right-0 bottom-0 border border-b-0 border-[#555] bg-white px-2 text-sm leading-[21px] text-[#555]">
          1 новое уведомление
        </div>
      </main>
    </div>
  );
};

export default App;
